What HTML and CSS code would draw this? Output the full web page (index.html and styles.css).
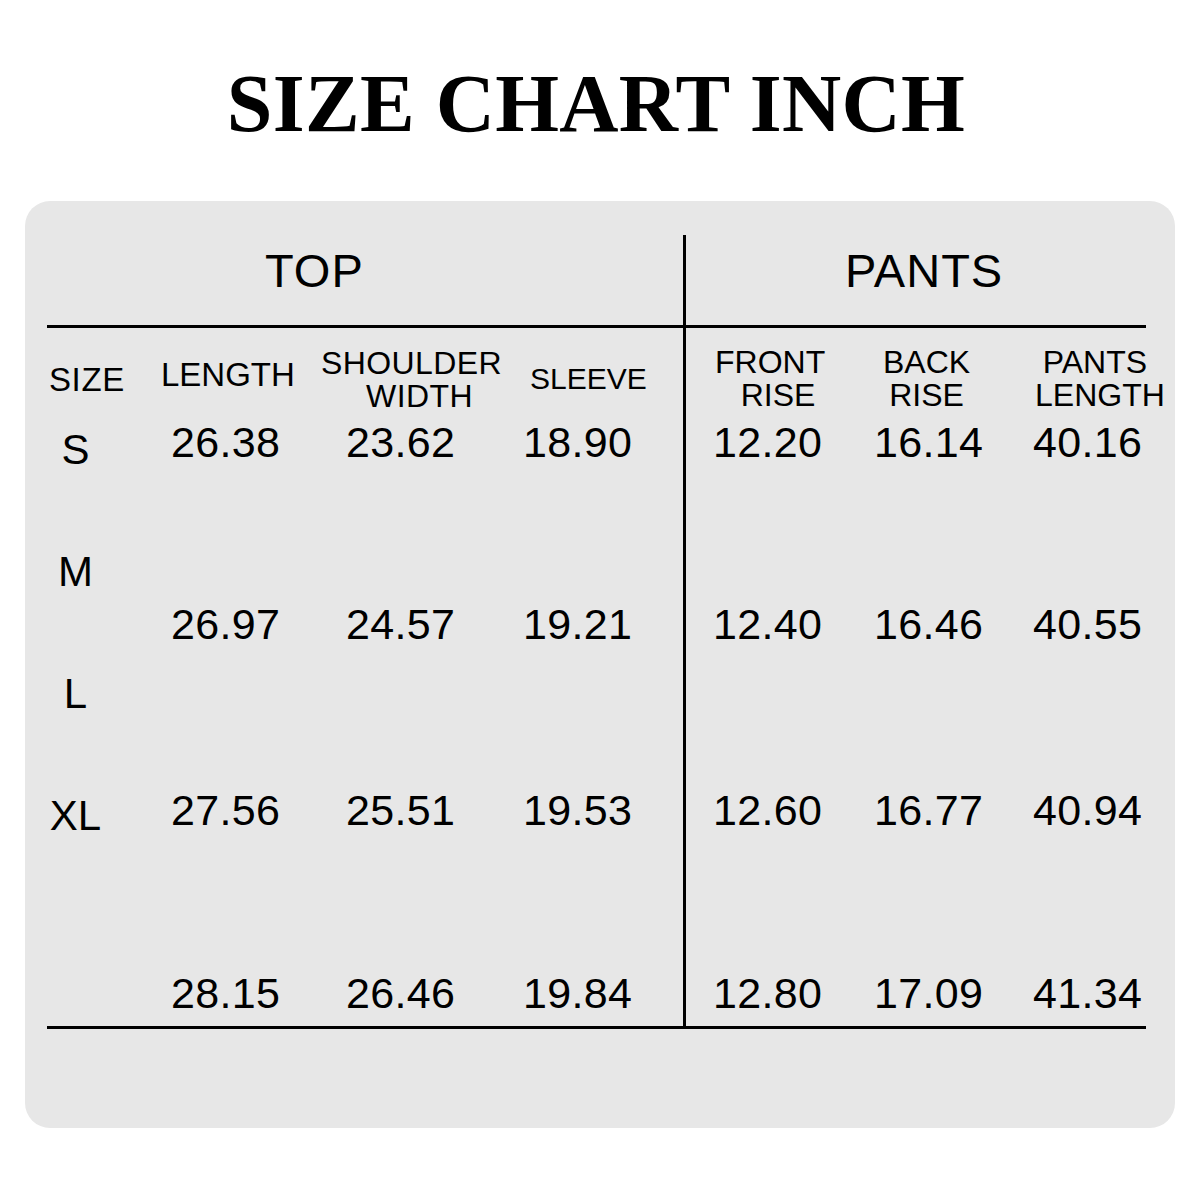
FILE: index.html
```html
<!DOCTYPE html>
<html lang="en">
<head>
<meta charset="utf-8">
<title>Size Chart Inch</title>
<link rel="stylesheet" href="styles.css">
</head>
<body>
<h1 class="title">SIZE CHART INCH</h1>
<div class="card">
  <div class="chart">
    <div class="sec sec-top">TOP</div>
    <div class="sec sec-pants">PANTS</div>
    <div class="vline"></div>
    <div class="hline hline-top"></div>

    <div class="hd hd-size">SIZE</div>
    <div class="hd hd-length">LENGTH</div>
    <div class="hd hd-shoulder"><span>SHOULDER</span><span class="shift-r">WIDTH</span></div>
    <div class="hd hd-sleeve">SLEEVE</div>
    <div class="hd hd-front"><span>FRONT</span><span class="shift-r">RISE</span></div>
    <div class="hd hd-back"><span>BACK</span><span>RISE</span></div>
    <div class="hd hd-plength"><span class="shift-l">PANTS</span><span>LENGTH</span></div>

    <div class="sizes"><span>S</span><span>M</span><span>L</span><span>XL</span></div>

    <div class="num r1 c-len">26.38</div>
    <div class="num r1 c-sh">23.62</div>
    <div class="num r1 c-sl">18.90</div>
    <div class="num r1 c-fr">12.20</div>
    <div class="num r1 c-bk">16.14</div>
    <div class="num r1 c-pl">40.16</div>

    <div class="num r2 c-len">26.97</div>
    <div class="num r2 c-sh">24.57</div>
    <div class="num r2 c-sl">19.21</div>
    <div class="num r2 c-fr">12.40</div>
    <div class="num r2 c-bk">16.46</div>
    <div class="num r2 c-pl">40.55</div>

    <div class="num r3 c-len">27.56</div>
    <div class="num r3 c-sh">25.51</div>
    <div class="num r3 c-sl">19.53</div>
    <div class="num r3 c-fr">12.60</div>
    <div class="num r3 c-bk">16.77</div>
    <div class="num r3 c-pl">40.94</div>

    <div class="num r4 c-len">28.15</div>
    <div class="num r4 c-sh">26.46</div>
    <div class="num r4 c-sl">19.84</div>
    <div class="num r4 c-fr">12.80</div>
    <div class="num r4 c-bk">17.09</div>
    <div class="num r4 c-pl">41.34</div>

    <div class="hline hline-bottom"></div>
  </div>
</div>
</body>
</html>
```
FILE: styles.css
```css
html, body {
  margin: 0;
  padding: 0;
  background: #ffffff;
}

body {
  width: 1200px;
  height: 1200px;
  font-family: "Liberation Sans", Arial, sans-serif;
  color: #000;
}

.title {
  margin: 63px 0 0 0;
  font-family: "Liberation Serif", "Times New Roman", serif;
  font-weight: bold;
  font-size: 82px;
  line-height: 82px;
  text-align: center;
  letter-spacing: 0.3px;
  padding-right: 8px;
}

.card {
  box-sizing: border-box;
  width: 1150px;
  height: 927px;
  margin: 56px 0 0 25px;
  padding: 34px 29px 0 22px;
  background: #e7e7e7;
  border-radius: 25px;
}

.chart {
  display: grid;
  grid-template-columns: 123px 175px 174px 164px 3px 184px 163px 113px;
  grid-template-rows: 90px 3px 88px 182px 186px 183px 59px 3px;
}

.vline {
  grid-column: 5;
  grid-row: 1 / 9;
  background: #000;
}

.hline {
  grid-column: 1 / -1;
  background: #000;
}

.hline-top { grid-row: 2; }
.hline-bottom { grid-row: 8; }

.sec {
  grid-row: 1;
  font-size: 47px;
  line-height: 47px;
  margin-top: 12px;
  justify-self: start;
  letter-spacing: 1px;
}

.sec-top {
  grid-column: 1 / 5;
  margin-left: 218px;
}

.sec-pants {
  grid-column: 6 / 9;
  margin-left: 159px;
}

.hd {
  grid-row: 3;
  justify-self: start;
  align-self: start;
  font-size: 32px;
  line-height: 33px;
  white-space: nowrap;
  display: flex;
  flex-direction: column;
  align-items: center;
}

.hd span {
  display: block;
}

.shift-r { padding-left: 16px; }
.shift-l { padding-right: 10px; }

.hd-size {
  grid-column: 1;
  font-size: 33px;
  line-height: 33px;
  letter-spacing: 0.6px;
  margin: 35px 0 0 2px;
}

.hd-length {
  grid-column: 2;
  font-size: 33px;
  line-height: 33px;
  margin: 30px 0 0 -9px;
}

.hd-shoulder {
  grid-column: 3;
  letter-spacing: 0.4px;
  margin: 19px 0 0 -24px;
}

.hd-sleeve {
  grid-column: 4;
  font-size: 30px;
  line-height: 30px;
  margin: 36px 0 0 11px;
}

.hd-front {
  grid-column: 6;
  margin: 18px 0 0 29px;
}

.hd-back {
  grid-column: 7;
  margin: 18px 0 0 13px;
}

.hd-plength {
  grid-column: 8;
  margin: 18px 0 0 2px;
}

.sizes {
  grid-column: 1;
  grid-row: 4 / 8;
  justify-self: start;
  width: 57px;
  display: flex;
  flex-direction: column;
  align-items: center;
  gap: 80px;
  padding-top: 13px;
  font-size: 42px;
  line-height: 42px;
}

.num {
  font-size: 43px;
  line-height: 43px;
  margin-top: 5px;
  white-space: nowrap;
  letter-spacing: 0.3px;
}

.r1 { grid-row: 4; }
.r2 { grid-row: 5; }
.r3 { grid-row: 6; }
.r4 { grid-row: 7; }

.c-len { grid-column: 2; padding-left: 1px; }
.c-sh { grid-column: 3; padding-left: 1px; }
.c-sl { grid-column: 4; padding-left: 4px; }
.c-fr { grid-column: 6; padding-left: 27px; }
.c-bk { grid-column: 7; padding-left: 4px; }
.c-pl { grid-column: 8; }
```
